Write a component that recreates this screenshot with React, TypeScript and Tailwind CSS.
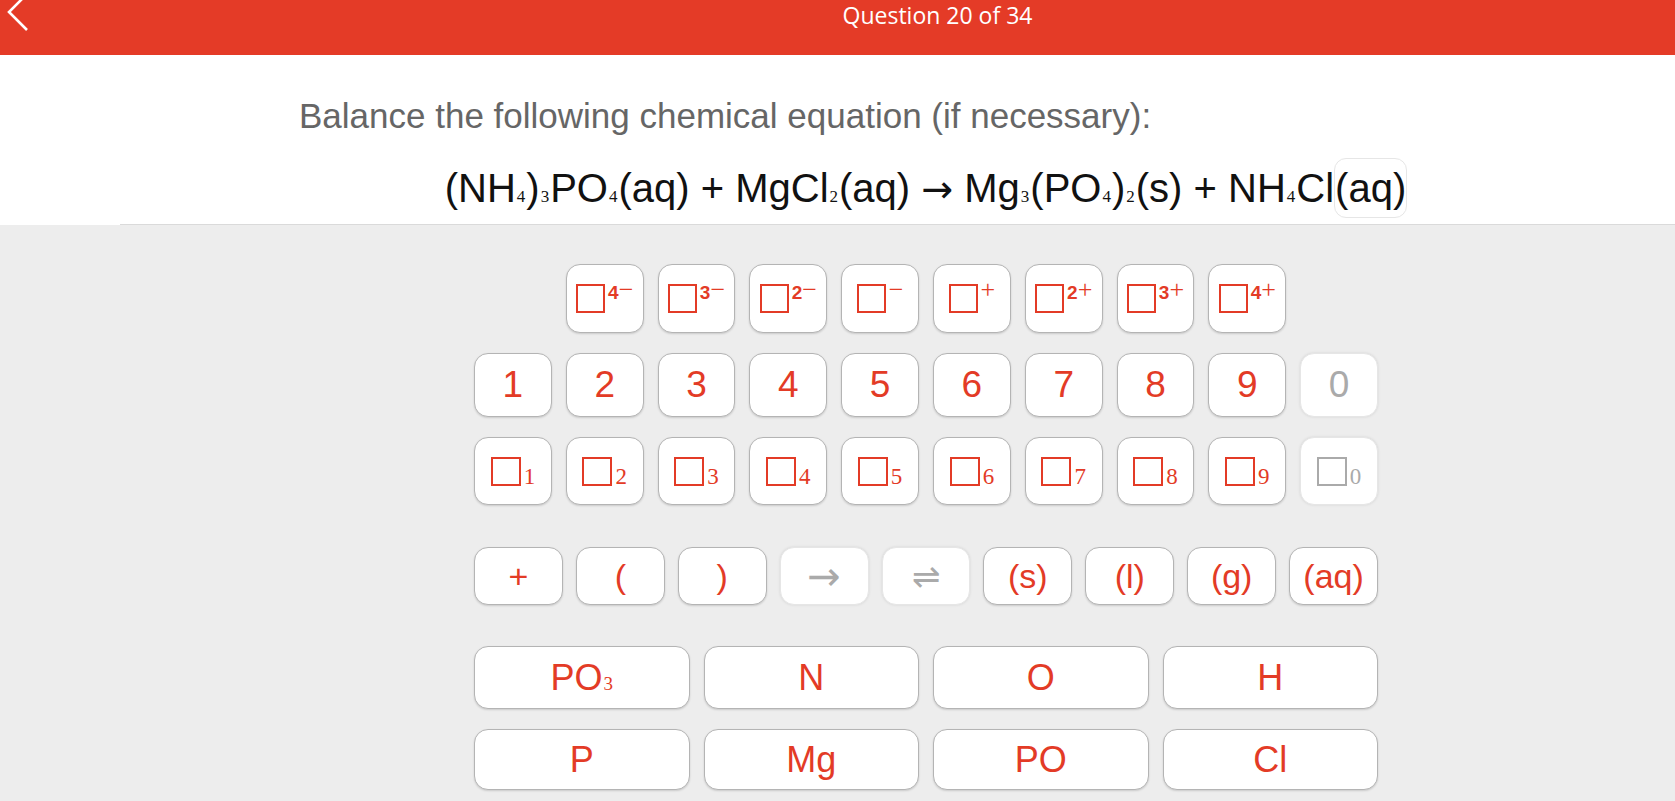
import clsx from "clsx";
import type { ReactNode } from "react";

// small serif digit used for subscripts in formulas
function Sub({ children, className }: { children: ReactNode; className?: string }) {
  return (
    <span className={clsx("font-['Liberation_Serif',serif] leading-none", className ?? "text-[17px] mx-[1px]")}>
      {children}
    </span>
  );
}

function Box({ className }: { className?: string }) {
  return <span className={clsx("inline-block border-2 border-current", className ?? "w-[29px] h-[29px]")} />;
}

function Key({
  children,
  off,
  className,
}: {
  children: ReactNode;
  off?: boolean;
  className?: string;
}) {
  return (
    <button
      className={clsx(
        "flex items-center justify-center rounded-[14px] bg-white font-['Liberation_Sans','DejaVu_Sans',sans-serif]",
        off
          ? "text-[#aaaaaa] border border-[#e6e6e6] shadow-[0_0_3px_rgba(0,0,0,0.1)]"
          : "text-[#e33b26] border border-[#b4b4b4] shadow-[0_1px_2px_rgba(0,0,0,0.15)]",
        className
      )}
    >
      {children}
    </button>
  );
}

const charges = [
  { n: "4", s: "−" },
  { n: "3", s: "−" },
  { n: "2", s: "−" },
  { n: "", s: "−" },
  { n: "", s: "+" },
  { n: "2", s: "+" },
  { n: "3", s: "+" },
  { n: "4", s: "+" },
];

const digits = ["1", "2", "3", "4", "5", "6", "7", "8", "9"];

export default function App() {
  return (
    <div className="w-[1675px] h-[801px] overflow-hidden bg-[#ededed] flex flex-col">
      {/* HEADER */}
      <div className="h-[55px] bg-[#e43b27] flex overflow-hidden shrink-0">
        <div className="w-[40px] h-[40px]">
          <svg width="40" height="40" viewBox="0 0 40 40">
            <polyline points="26,-5 9,12 27,30" fill="none" stroke="#fff" strokeWidth="2.6" />
          </svg>
        </div>
        <div className="flex-1 flex justify-center pl-[160px]">
          <span className="font-['Open_Sans',sans-serif] text-[23px] leading-[30px] text-white">
            Question 20 of 34
          </span>
        </div>
      </div>

      {/* QUESTION */}
      <div className="bg-white shrink-0">
        <p className="mt-[41px] pl-[299px] font-['Liberation_Sans',Arial,sans-serif] text-[35px] leading-[40px] text-[#666666]">
          Balance the following chemical equation (if necessary):
        </p>
        <div className="mt-[28px] flex justify-center pl-[177px]">
          <p className="font-['Liberation_Sans',Arial,sans-serif] text-[40px] leading-[46px] text-[#111111] whitespace-nowrap">
            (NH<Sub>4</Sub>)<Sub>3</Sub>PO<Sub>4</Sub>(aq) + MgCl<Sub>2</Sub>(aq){" "}
            <span className="font-['DejaVu_Sans',sans-serif] text-[38px] leading-none">→</span> Mg<Sub>3</Sub>(PO
            <Sub>4</Sub>)<Sub>2</Sub>(s) + NH<Sub>4</Sub>Cl
            <span className="inline-block py-[6px] -my-[6px] rounded-[12px] border border-[#e6e6e6]">(aq)</span>
          </p>
        </div>
        <div className="mt-[12px] ml-[120px] h-px bg-[#dadada]" />
      </div>

      {/* KEYPAD */}
      <div className="flex-1 pt-[39px] pl-[177px]">
        <div className="w-[904px] mx-auto flex flex-col">
          <div className="grid grid-cols-10 gap-x-[14px]">
            {charges.map((c, i) => (
              <Key key={i} className={clsx("h-[69px]", i === 0 && "col-start-2")}>
                <span className="flex items-start">
                  <Box />
                  <span className="ml-[3px] flex items-start">
                    {c.n && <span className="font-bold text-[19px] leading-[18px]">{c.n}</span>}
                    <span className="font-['Liberation_Serif',serif] text-[26px] leading-[18px] -mt-[3px]">
                      {c.s}
                    </span>
                  </span>
                </span>
              </Key>
            ))}
          </div>

          <div className="mt-[20px] grid grid-cols-10 gap-x-[14px]">
            {digits.map((d) => (
              <Key key={d} className="h-[64px] text-[37px]">
                {d}
              </Key>
            ))}
            <Key off className="h-[64px] text-[37px]">
              0
            </Key>
          </div>

          <div className="mt-[20px] grid grid-cols-10 gap-x-[14px]">
            {[...digits, "0"].map((d) => (
              <Key key={d} off={d === "0"} className="h-[68px]">
                <span className="flex items-end">
                  <Box className="w-[30px] h-[29px]" />
                  <Sub className="ml-[3px] text-[23px] leading-[16px] -mb-[2px]">{d}</Sub>
                </span>
              </Key>
            ))}
          </div>

          <div className="mt-[42px] grid grid-cols-9 gap-x-[13px] text-[34px]">
            <Key className="h-[58px]">+</Key>
            <Key className="h-[58px]">(</Key>
            <Key className="h-[58px]">)</Key>
            <Key off className="h-[58px]">
              <span className="font-['DejaVu_Sans',sans-serif] text-[40px]">→</span>
            </Key>
            <Key off className="h-[58px]">
              <span className="font-['DejaVu_Sans',sans-serif] text-[34px]">⇌</span>
            </Key>
            <Key className="h-[58px]">(s)</Key>
            <Key className="h-[58px]">(l)</Key>
            <Key className="h-[58px]">(g)</Key>
            <Key className="h-[58px]">(aq)</Key>
          </div>

          <div className="mt-[41px] grid grid-cols-4 gap-x-[14px] gap-y-[20px] text-[36px]">
            <Key className="h-[63px]">
              <span>
                PO<Sub className="text-[19px] ml-[1px]">3</Sub>
              </span>
            </Key>
            <Key className="h-[63px]">N</Key>
            <Key className="h-[63px]">O</Key>
            <Key className="h-[63px]">H</Key>
            <Key className="h-[61px]">P</Key>
            <Key className="h-[61px]">Mg</Key>
            <Key className="h-[61px]">PO</Key>
            <Key className="h-[61px]">Cl</Key>
          </div>
        </div>
      </div>
    </div>
  );
}
